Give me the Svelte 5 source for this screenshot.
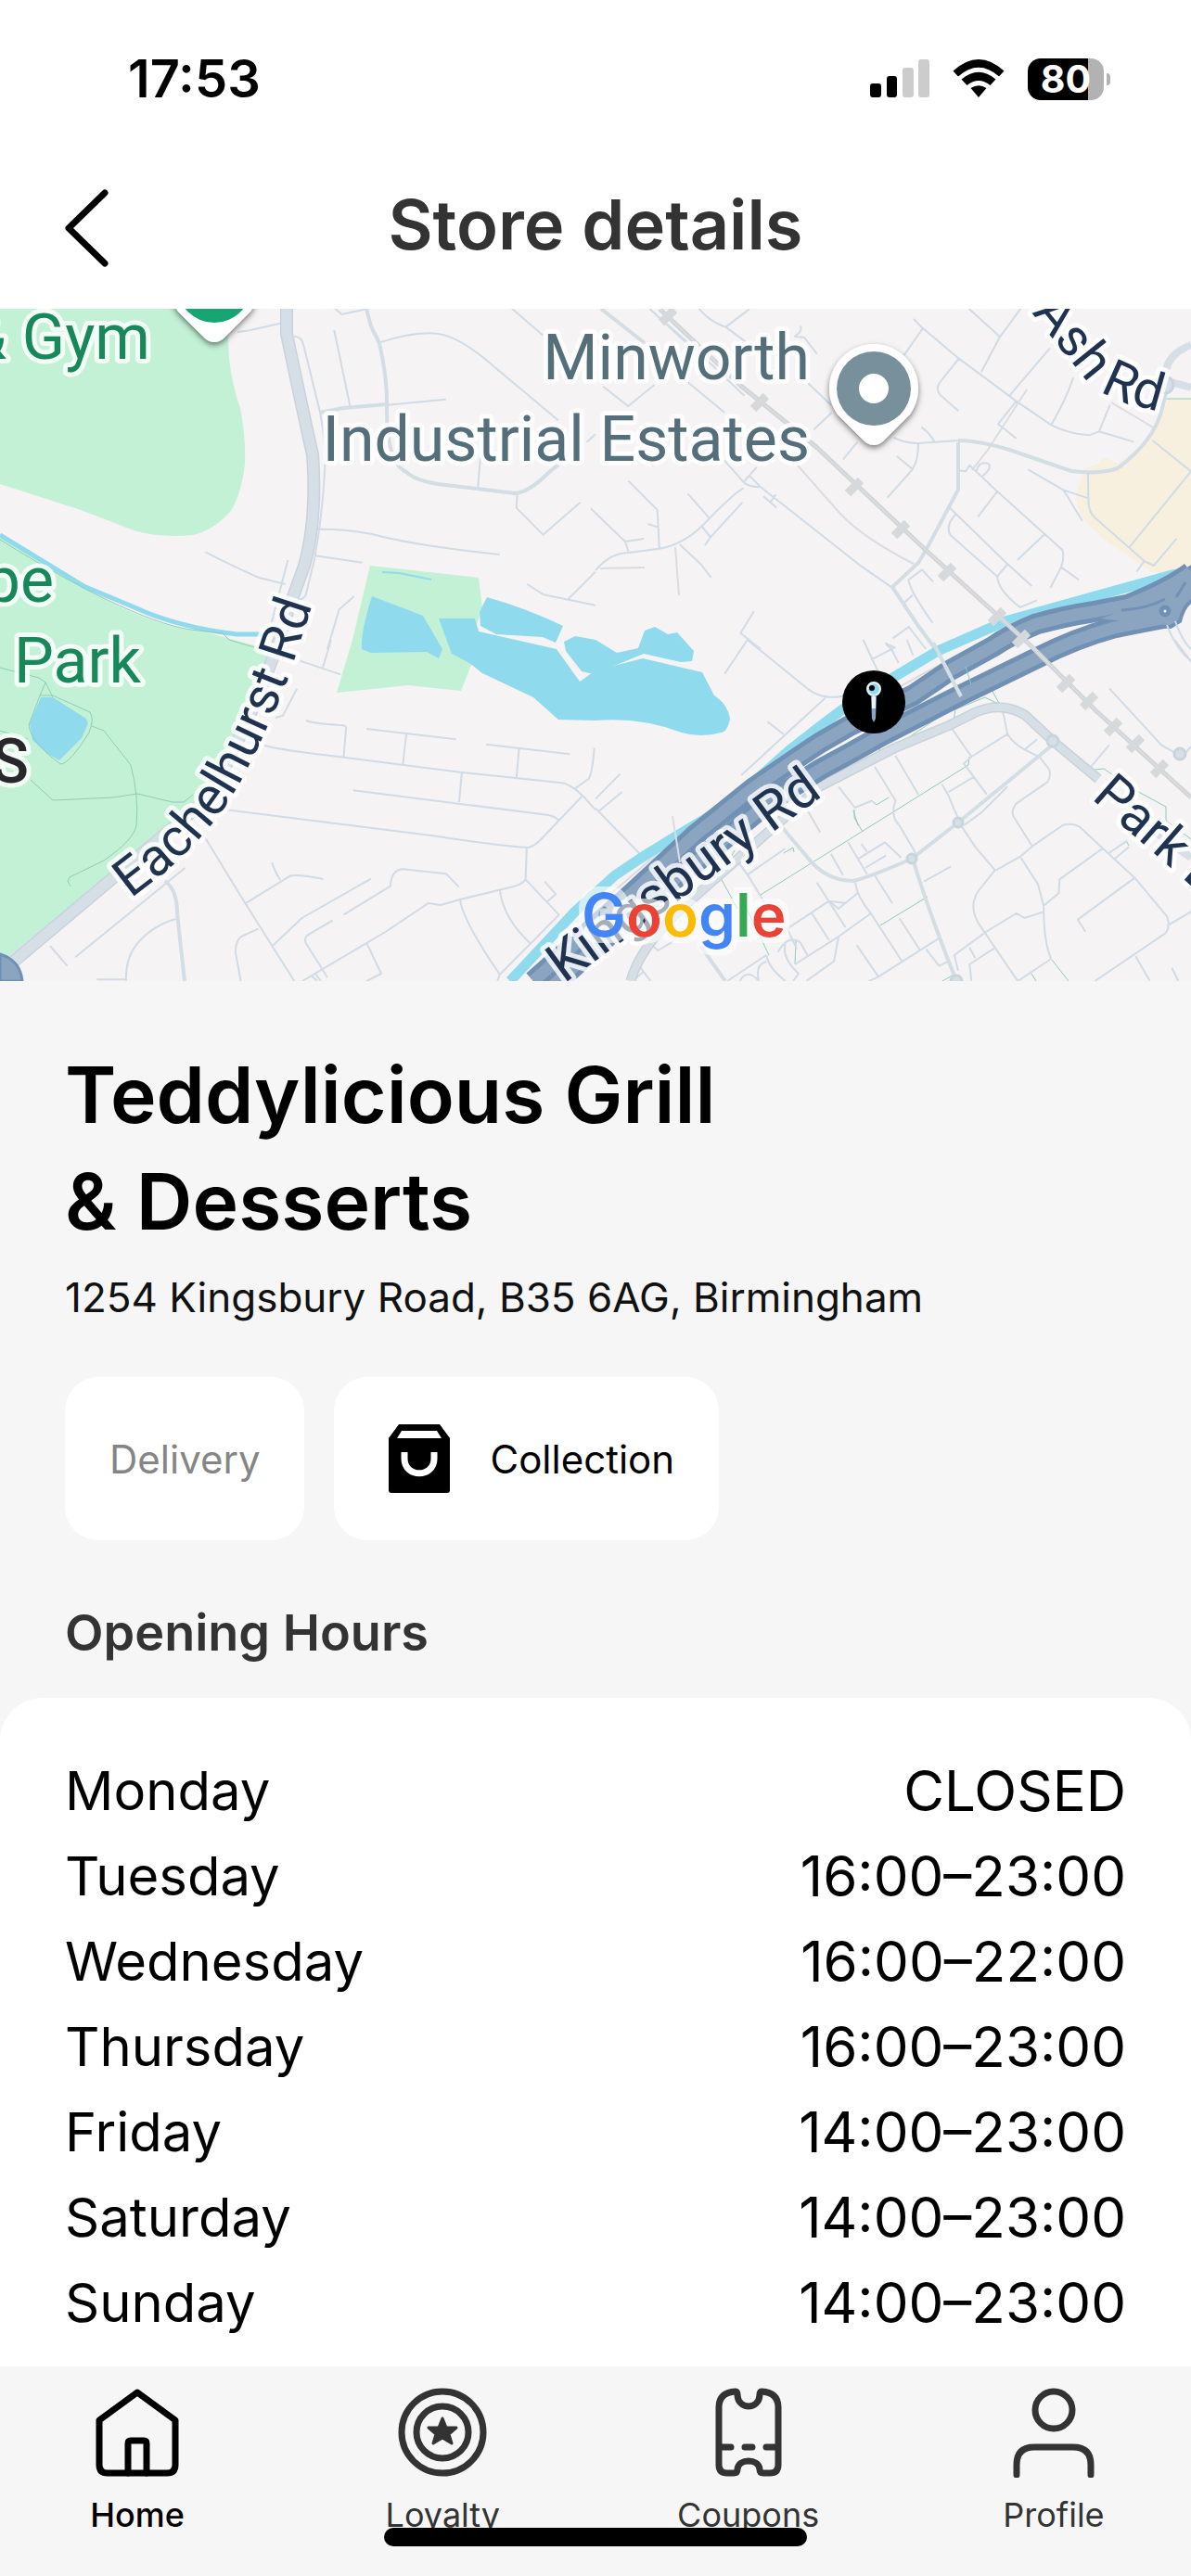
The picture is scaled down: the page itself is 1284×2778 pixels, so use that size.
<script>
  const hours = [
    { day: 'Monday', time: 'CLOSED' },
    { day: 'Tuesday', time: '16:00–23:00' },
    { day: 'Wednesday', time: '16:00–22:00' },
    { day: 'Thursday', time: '16:00–23:00' },
    { day: 'Friday', time: '14:00–23:00' },
    { day: 'Saturday', time: '14:00–23:00' },
    { day: 'Sunday', time: '14:00–23:00' }
  ];

  // Map geometry is drawn per quadrant; each quadrant has its own local units.
  const minorRoads = [
    {
      at: 'translate(0 320) scale(.4094 .33333)',
      d: 'M625 115 L660 108 L738 86 M775 128 Q795 128 800 160 L842 370 Q860 480 855 560 Q850 700 828 850 L805 965 Q798 980 785 980 M880 108 L922 355 M882 38 L900 57 L965 40 M1000 148 Q1120 100 1180 128 Q1230 150 1300 225 L1470 400 M1348 38 L1430 125 M1020 350 L1174 332 M1265 520 L1258 622 M1362 640 L1360 683 L1430 770 L1528 665 M1556 685 L1568 700 M828 753 Q900 750 980 768 Q1090 805 1316 834 M830 838 L954 860 M541 826 Q610 870 680 908 L752 930 M758 852 L715 1055 M932 970 L893 1012 L862 1140 M1388 930 L1432 964 L1568 998 M1495 980 L1568 890 M1545 470 L1568 445'
    },
    {
      at: 'translate(642 320) scale(.4094 .33333)',
      d: 'M142 38 L240 150 M272 38 Q300 80 343 98 L400 150 M343 98 L405 40 M540 95 Q545 112 525 128 L550 132 L583 185 M20 290 L86 354 L155 285 M242 275 L340 375 M560 280 L620 350 M575 430 L622 375 M190 90 L280 190 L392 320 M652 526 L690 470 M785 456 Q820 475 850 474 L955 465 M838 72 L862 102 L812 190 M862 102 L957 200 L1108 338 L1200 415 Q1250 445 1300 448 L1326 436 L1418 470 M957 200 L905 280 Q895 300 908 318 L956 370 M983 38 L1065 130 M1120 38 L1065 130 L1016 243 M1197 166 L1090 320 M1108 338 L1060 412 L1108 458 M1258 262 Q1240 330 1200 415 M1355 350 L1326 436 M858 422 Q880 440 893 470 M850 474 Q850 530 835 558 L769 650 M835 558 L793 515 M955 562 L975 565 L985 545 L1058 630 L1183 768 L1230 820 Q1235 850 1226 875 L1198 942 M1226 875 L1273 916 M1003 565 Q1010 530 1035 540 Q1045 555 1018 582 M1058 630 L1007 712 M1183 768 L1111 852 M932 682 L1085 865 L1149 936 M948 705 Q920 740 935 772 L1058 905 Q1060 950 1118 1005 L1162 982 M1085 865 L1058 905 M1139 559 L1232 625 L1298 652 M1232 625 L1282 725 M1297 572 L1298 665 Q1300 700 1315 715 L1445 855 L1425 890 M1445 855 L1470 870 L1530 783 M1405 812 L1568 565 L1467 465 M340 530 L390 600 Q400 615 435 616 L700 872 L780 940 M390 600 L424 552 M404 578 L435 616 M390 620 Q370 630 300 717 Q240 800 168 815 L88 828 Q40 828 0 885 M300 717 L243 637 M303 778 L387 665 M280 743 L303 778 L288 804 M168 815 L163 690 L86 595 M163 745 L138 735 M222 802 L278 866 L304 908 M0 700 L78 792 L127 783 M78 792 L88 828 M475 640 L460 665 M442 645 L477 683 M813 990 L835 965 M889 922 L860 883 L825 915 Q822 940 888 1056 M765 1125 L780 1140 M783 1105 L825 1068 L870 1140 M417 1018 L382 1088 L435 1140'
    },
    {
      at: 'translate(0 690) scale(.4094 .33333)',
      d: 'M872 0 L850 90 M790 68 L897 112 M782 158 L745 245 L725 252 M697 342 Q740 357 905 380 L1212 428 L1480 463 Q1510 470 1550 525 L1568 550 M806 261 Q830 272 890 275 Q915 275 911 290 L905 380 M965 288 L1201 322 M1070 305 L1061 402 M1280 338 L1500 370 M1367 350 L1360 446 M1216 430 L1209 525 M930 487 L1440 566 Q1460 570 1470 582 M1565 350 Q1560 430 1550 450 L1512 483 M596 550 Q880 595 1150 635 Q1320 668 1392 672 Q1410 665 1425 645 L1532 507 M1387 672 L1384 775 Q1375 790 1355 797 L1212 840 L1160 858 L1128 852 L1015 945 L796 1104 M1384 775 L1472 890 L1316 1083 L1310 1104 M1434 782 L1464 823 L1440 848 M1212 840 Q1215 900 1316 1083 M1316 808 Q1325 900 1395 980 M540 640 L646 853 L775 1104 M716 720 Q720 740 738 778 M646 853 L765 763 Q790 758 851 774 M977 773 L795 900 L716 992 M905 889 L1028 797 Q1030 745 1060 742 L1175 757 L1208 799 M876 908 L810 955 Q800 965 805 980 L862 1092 M680 935 L635 960 Q620 975 620 1010 L634 1104 M463 903 Q400 925 360 985 Q330 1030 332 1104 M255 1099 L332 1099 M487 738 L198 1027 M132 990 L177 1055 M965 980 L1004 1080 L965 1104 M819 1085 L835 1104 M829 1078 L845 1104'
    },
    {
      at: 'translate(642 690) scale(.4094 .33333)',
      d: 'M400 0 L560 160 Q600 195 650 182 L725 130 M400 0 L340 110 M705 0 L745 105 M725 65 L788 25 L763 10 M775 20 L798 75 M820 0 L836 50 M453 265 L495 305 M605 188 L384 438 M65 434 L0 515 M70 492 L8 555 L115 690 M8 555 L0 545 M940 290 L990 378 L1085 305 M1070 215 L1085 305 Q1100 335 1130 355 L1170 380 L1195 420 Q1200 445 1190 460 L1108 530 Q1090 560 1105 580 L1150 668 L1230 600 Q1255 590 1275 605 L1420 770 L1505 895 Q1515 930 1500 950 L1315 1104 M1130 355 L1163 322 M1055 745 L1120 700 L1150 668 M640 475 L683 543 L725 522 M735 410 L790 520 Q775 570 800 600 L843 690 M790 375 L850 500 M990 378 L970 400 L1030 500 M930 492 L998 442 M912 468 Q930 500 940 535 L956 580 M1085 475 L1015 560 L970 600 M965 605 L1000 670 L1052 745 L1010 810 Q980 860 1010 920 L1112 1104 L1200 1032 M1120 705 L1165 790 L1180 860 Q1180 980 1200 1032 M1180 860 L1220 820 L1222 775 L1335 675 M1420 770 L1270 905 L1290 944 M1568 880 L1505 925 M1422 1023 L1460 1104 M1518 1062 L1535 1104 M1352 690 L1400 650 M1368 708 L1405 670 M555 545 L592 623 M865 782 L936 733 M684 785 Q688 830 725 885 L808 1042 M735 762 L782 853 M725 885 L640 960 L525 1050 M690 820 L640 870 L615 845 L660 852 M583 785 L658 930 M615 845 L505 935 L530 1000 M365 700 L400 760 L500 675 M398 755 L445 850 M690 710 L762 655 L805 705 M700 660 L715 685 M665 655 L715 758 M765 698 L710 738 M620 692 L652 762 M570 885 L615 972 M640 960 L628 1040 L555 1104 M480 1010 Q510 950 540 980 L558 1020 M500 985 Q490 1030 535 1080 L520 1104 M347 1104 L450 1020 M450 1020 Q455 1060 500 1104 M430 1104 Q420 1050 450 1040 M380 1104 Q400 1060 430 1104 M688 988 L745 1090 L905 965 M745 1090 L720 1104 M800 900 L855 1005 M870 1000 L905 1055 L930 1040 M1028 945 L945 1020 L955 1070 M1028 945 L1108 885 L1130 900 L1180 880 M985 995 L1000 1030 M1050 998 L985 1050 L990 1104 M115 1055 L145 1104 M98 1104 L125 1075 M150 990 L165 1005 L205 975 M1353 157 L1490 340 L1525 365 M1540 385 L1568 345 M1525 0 L1568 70 M1305 410 L1353 340'
    }
  ];

  const sleepers = [
    [720, 341], [819, 434], [921, 525], [971, 571], [1021, 617], [1075, 665], [1101, 689],
    [1149, 737], [1174, 756], [1200, 784], [1224, 802], [1250, 829]
  ];

  const carriageways = [
    'M1284 617 Q1262 634 1217 652 L1177 660 Q1150 664 1117 673 Q1090 684 1071 697 L1024 723 L984 750 L917 782 L884 801 L860 817 L812 850 L750 900 L683 962 L575 1058',
    'M1257 666 Q1225 672 1201 677 Q1160 688 1117 710 L1031 752 L951 793 L917 812 L884 830 L830 864 L765 918 L695 974 L597 1062'
  ];

  const nav = ['Home', 'Loyalty', 'Coupons', 'Profile'];
</script>

<div class="screen">
  <div class="status">
    <span class="clock">17:53</span>
    <div class="indicators">
      <svg class="signal" viewBox="0 0 64 42" aria-hidden="true">
        <rect x="0" y="26" width="12" height="15" rx="3" />
        <rect x="18" y="18" width="11" height="23" rx="3" />
        <rect class="off" x="35" y="9" width="12" height="32" rx="3" />
        <rect class="off" x="52" y="0" width="12" height="41" rx="3" />
      </svg>
      <svg class="wifi" viewBox="0 0 56 42" aria-hidden="true">
        <path d="M0.500 12.500 Q28 -12.500 55.500 12.500 L50 18.500 Q28 -1 6 18.500 Z" />
        <path d="M9.500 21.500 Q28 6 46.500 21.500 L40.500 28 Q28 18 15.500 28 Z" />
        <path d="M19.500 31 Q28 25.500 36.500 31 L28 41 Z" />
      </svg>
      <span class="battery">80</span>
    </div>
  </div>

  <header>
    <button class="back" aria-label="Back">
      <svg viewBox="0 0 52 88"><path d="M46 6 L7 44 L46 82" /></svg>
    </button>
    <h2>Store details</h2>
  </header>

  <svg class="map" viewBox="0 333 1284 725" preserveAspectRatio="xMidYMid slice" role="img" aria-label="Map">
    <defs>
      <filter id="shade" x="-30%" y="-30%" width="160%" height="160%">
        <feDropShadow dx="0" dy="3" stdDeviation="3" flood-color="#000" flood-opacity=".5" />
      </filter>
      <filter id="halo" x="-10%" y="-20%" width="120%" height="140%">
        <feMorphology in="SourceAlpha" operator="dilate" radius="6" result="wide" />
        <feFlood flood-color="#fff" flood-opacity=".6" />
        <feComposite in2="wide" operator="in" result="glow" />
        <feMerge><feMergeNode in="glow" /><feMergeNode in="SourceGraphic" /></feMerge>
      </filter>
      <path id="eachelhurst" d="M141 969 L176 942 Q234 892 262 838 Q294 776 314 722 L344 630" />
      <path id="ash" d="M1112 337 L1166 404 Q1185 425 1213 434 L1284 454" />
    </defs>
    <rect y="333" width="1284" height="725" fill="#f5f3f4" />

    <g class="green">
      <path d="M0 333 H244 L247 386 Q250 415 259 440 Q265 470 264 500 Q260 535 248 552 Q230 572 208 577 Q175 580 147 573 L87 550 L0 522 Z" />
      <path d="M0 578 L70 623 L130 655 Q180 678 215 680 L274 696 L290 705 L283 725 Q270 780 240 830 Q210 880 135 930 L8 1033 L0 1030 Z" />
      <path d="M399 610 L516 623 L520 655 L512 680 L508 717 L497 745 L440 739 L363 747 L380 690 Z" />
    </g>
    <path d="M1253 443 L1260 430 H1284 V612 L1262 621 L1240 616 L1217 600 Q1160 565 1160 535 L1167 510 L1170 505 L1184 500 L1190 493 L1205 500 Q1235 480 1245 460 Z" fill="#f7f0df" />
    <g class="water">
      <path d="M401 643 L456 664 L477 700 L473 710 L460 703 L400 704 L390 700 Q389 680 401 643 Z" />
      <path d="M473 667 L512 667 L516 681 L600 700 L625 735 L642 723 L693 710 L757 725 L770 750 Q785 760 787 775 Q784 790 777 790 Q755 796 735 790 Q690 773 642 777 L602 776 L575 752 L520 726 L506 715 L487 705 Z" />
      <path d="M525 644 Q565 655 607 675 L599 693 L585 687 L535 684 L518 675 L517 660 Z" />
      <path d="M608 692 L620 686 L642 690 L665 704 L688 699 L695 680 L706 676 L720 684 L730 682 L748 702 L746 713 L734 714 L694 705 L640 727 L627 724 L610 702 Z" />
      <path d="M44 752 L57 752 L93 775 L95 780 L88 796 L64 820 L50 812 L35 798 L32 780 Z" />
    </g>
    <path class="stream" d="M0 577 L90 632 L145 655 Q190 676 255 684 L283 684" />
    <path class="brook" d="M412 617 L430 618 L465 625" />
    <g class="path">
      <path d="M0 582 Q150 675 214 680 L240 683 L247 690 L274 698 M0 720 L42 731 L49 736 L57 752 M49 736 L43 750 L31 782 Q33 800 65 824 Q75 824 96 790 Q102 775 97 768 L57 750 H43 M0 788 L30 797 M99 783 L112 788 L141 825 Q150 860 147 890 Q145 905 112 928 L75 946 L73 950 L76 956 M33 841 L57 863 L122 860 L148 856 L186 865 H198 L208 857" />
      <path d="M1067 740 L1078 760 L1062 752 L1030 765 L1028 778 M919 830 L948 810 L949 805 M1045 816 L1044 825 L820 965 M920 874 L925 890 M939 863 L945 868 L958 860 M921 873 V882 L930 897 M777 946 L792 917 M845 920 L855 914 L856 919 M777 947 L795 980 M805 980 L829 1030 M858 1015 L857 1040 M949 998 L1000 967 M1180 830 L1190 829 L1220 850 L1257 870 V885 L1284 905 M1215 908 L1217 912 M1112 1050 L1117 1058 M1134 1035 L1152 1058 M1016 1058 L1030 1050 M888 842 L980 795 L1020 768 M1257 430 H1284" />
    </g>

    {#each minorRoads as tile}
      <g transform={tile.at}><path class="minor" d={tile.d} /></g>
    {/each}

    <g class="medium">
      <path d="M395 333 L400 352 L409 370 Q418 410 417 440 Q417 500 438 509 Q450 520 480 523 L555 532 Q570 531 590 511 L603 500 M345 445 L370 440 L417 436" />
      <path d="M648 333 L695 370 M1033 477 V528 L1000 590 L990 607 L962 633 L990 675 L1007 698 M1033 475 Q1055 475 1088 485 L1155 508 Q1185 512 1205 505 Q1245 475 1253 440 L1258 420" />
      <path d="M178 950 Q191 960 191 985 L199 1058 M843 892 L870 924 Q890 950 920 950 Q940 945 983 926 L1033 887 L1135 803 M984 926 Q1000 980 1030 1055 M755 1020 L782 1058" />
    </g>
    <path class="arterial-edge" d="M309 333 V360 Q330 460 337 490 Q342 560 328 610 L310 660 Q285 750 225 860 Q190 890 5 1045" />
    <path class="arterial" d="M309 333 V360 Q330 460 337 490 Q342 560 328 610 L310 660 Q285 750 225 860 Q190 890 5 1045" />
    <path class="connector-edge" d="M680 1058 Q690 1020 740 975 L850 878 L884 848 L964 807 L1024 782 L1052 768 Q1080 756 1105 771 L1136 800 L1184 840" />
    <path class="connector" d="M680 1058 Q690 1020 740 975 L850 878 L884 848 L964 807 L1024 782 L1052 768 Q1080 756 1105 771 L1136 800 L1184 840 M1235 890 L1284 925 M1284 372 Q1255 383 1256 410 L1284 418" />
    <g class="roundabout">
      <circle cx="1135" cy="799" r="6" /><circle cx="1033" cy="887" r="5" /><circle cx="983" cy="926" r="5" />
      <circle cx="1031" cy="1058" r="6" /><circle cx="1256" cy="415" r="9" /><circle cx="1272" cy="813" r="6" />
    </g>

    <path class="siding" d="M1284 626 Q1180 652 1110 674 Q1040 700 964 744 L884 796 L780 878 L700 928 L640 980" />
    <path class="river" d="M1284 617 L1264 620 L1184 642 L1084 670 L1011 702 L964 730 L907 766 L883 784 L850 810 L813 843 L783 868 L757 885 L727 903 L693 924 L663 944 L620 983 L550 1058" />
    <g class="motorway-edge">
      {#each carriageways as d}<path {d} />{/each}
    </g>
    <path class="junction" d="M1177 668 Q1240 648 1260 628 L1286 610 V647 Q1276 653 1272 670 L1262 676 L1230 674 Z" />
    <g class="motorway">
      {#each carriageways as d}<path {d} />{/each}
    </g>
    <path class="slip" d="M1209 658 Q1235 657 1256 646 M1268 644 L1278 628" />
    <path d="M0 1029 Q22 1036 24 1058 H0 Z" fill="#8ba5c1" stroke="#6f90b4" stroke-width="3" />
    <circle cx="1256" cy="659" r="4" fill="#f5f3f4" stroke="#6f90b4" stroke-width="5" />
    <path class="medium" d="M1006 693 L1036 751" />
    <path class="path" d="M1041 719 L1047 738" />
    <path class="minor" d="M1258 674 Q1268 700 1284 713 M1267 670 Q1275 692 1284 700" />

    <g class="rail">
      <path d="M711 333 L800 417 L880 482 L1000 595 L1110 695 L1180 765 L1284 860" />
      <path class="rail-core" d="M711 333 L800 417 L880 482 L1000 595 L1110 695 L1180 765 L1284 860" />
      {#each sleepers as [x, y]}
        <path class="sleeper" d="M{x - 7} {y + 7} L{x + 7} {y - 7}" />
      {/each}
      <path class="siding" d="M860 502 L905 553 Q930 580 985 608 M725 880 L733 930 M1107 420 L1065 485 L1048 507 M1198 434 L1245 462 M728 590 L732 642 M647 613 L695 612" />
    </g>

    <g class="label">
      <text class="place" x="162" y="387" text-anchor="end">&amp; Gym</text>
      <text class="place" x="58" y="649" text-anchor="end">pe</text>
      <text class="place" x="152" y="736" text-anchor="end">s Park</text>
      <text class="area" x="31" y="844" text-anchor="end">S</text>
      <text class="place grey" x="873" y="409" text-anchor="end">Minworth</text>
      <text class="place grey" x="873" y="497" text-anchor="end">Industrial Estates</text>
      <text class="road"><textPath href="#eachelhurst">Eachelhurst Rd</textPath></text>
      <text class="road"><textPath href="#ash">Ash Rd</textPath></text>
      <text class="road kingsbury" transform="translate(608 1061) rotate(-36)">Kingsbury Rd</text>
      <text class="road" transform="translate(1176 861) rotate(41)">Park Ln</text>
    </g>

    <g filter="url(#shade)">
      <path d="M942 371 A48 48 0 0 1 981 447 L952 476 Q942 484 932 476 L903 447 A48 48 0 0 1 942 371 Z" fill="#fff" />
      <path d="M231 260 A48 48 0 0 1 270 336 L241 365 Q231 373 221 365 L192 336 A48 48 0 0 1 231 260 Z" fill="#fff" />
    </g>
    <circle cx="942" cy="419" r="40" fill="#78909c" />
    <circle cx="942" cy="419" r="16" fill="#fff" />
    <circle cx="231" cy="308" r="40" fill="#17a673" />

    <circle cx="942" cy="757" r="34" fill="#000" />
    <circle cx="942" cy="743" r="7" fill="#90daee" stroke="#e8f4f8" stroke-width="2" />
    <circle cx="940" cy="742" r="3" fill="#000" />
    <path d="M939 751 H945 L944 775 L942 779 L940 775 Z" fill="#8ba5c1" />
    <path d="M940 751 H944 V764 H940 Z" fill="#e8f4f8" />

    <text class="google" x="627" y="1010" filter="url(#halo)"><tspan fill="#4285f4">G</tspan><tspan fill="#ea4335">o</tspan><tspan fill="#fbbc05">o</tspan><tspan fill="#4285f4">g</tspan><tspan fill="#34a853">l</tspan><tspan fill="#ea4335">e</tspan></text>
  </svg>

  <main>
    <h1>Teddylicious Grill<br />&amp; Desserts</h1>
    <p class="address">1254 Kingsbury Road, B35 6AG, Birmingham</p>
    <div class="modes">
      <button class="delivery">Delivery</button>
      <button class="collection">
        <svg viewBox="0 0 68 74" aria-hidden="true">
          <path fill-rule="evenodd" d="M12 0 H56 L67 15 V71 Q67 74 64 74 H4 Q1 74 1 71 V15 Z M15 7 L10 15 H58 L53 7 Z" />
          <path class="handle" d="M18 30 V37 C18 58 50 58 50 37 V30" />
        </svg>
        Collection
      </button>
    </div>
    <h3>Opening Hours</h3>
  </main>

  <section class="hours">
    <table>
      <tbody>
        {#each hours as row}
          <tr><th scope="row">{row.day}</th><td>{row.time}</td></tr>
        {/each}
      </tbody>
    </table>
  </section>

  <nav>
    {#each nav as name, i}
      <a href="#{name.toLowerCase()}" class:active={i === 0}>
        <svg viewBox="0 0 98 98" aria-hidden="true">
          {#if i === 0}
            <path d="M49 6 L90 36 V84 Q90 93 81 93 H17 Q8 93 8 84 V36 Z" />
            <path d="M39 93 V61 Q39 58 42 58 H56 Q59 58 59 61 V93" />
          {:else if i === 1}
            <circle cx="49" cy="49" r="44" />
            <circle cx="49" cy="49" r="28" />
            <path class="star" d="M49 34 L53 44 L64 44 L56 51 L59 61 L49 55 L39 61 L42 51 L34 44 L45 44 Z" />
          {:else if i === 2}
            <path d="M35 5 Q17 6 17 22 V84 Q17 93 26 93 H33 Q37 93 37 89 C38 77 60 77 61 89 Q61 93 65 93 H72 Q81 93 81 84 V22 Q81 6 63 5 Q61 5 61 9 C60 25 38 25 37 9 Q37 5 35 5 Z" />
            <path d="M19 65 H30 M45 65 H53 M68 65 H79" />
          {:else}
            <circle cx="49" cy="25" r="20" />
            <path d="M9 95 V84 Q9 65 28 65 H70 Q89 65 89 84 V95" />
          {/if}
        </svg>
        <span>{name}</span>
      </a>
    {/each}
    <div class="home-indicator"></div>
  </nav>
</div>

<style>
  :global(body) { background: #f6f6f6; }
  .screen {
    min-height: 100vh;
    display: flex;
    flex-direction: column;
    font-family: Inter, "Liberation Sans", sans-serif;
    color: #000;
    background: #f6f6f6;
  }
  button { font: inherit; color: inherit; border: 0; background: none; cursor: pointer; }

  .status {
    display: flex;
    align-items: center;
    justify-content: space-between;
    height: 130px;
    padding: 20px 94px 0 138px;
    background: #fff;
  }
  .clock { font-size: 56px; font-weight: 600; line-height: 64px; }
  .indicators { display: flex; align-items: center; gap: 25px; }
  .signal { width: 64px; height: 42px; }
  .signal .off { fill: #ccc; }
  .wifi { width: 56px; height: 42px; }
  .battery {
    position: relative;
    width: 82px;
    height: 45px;
    border-radius: 14px;
    background: linear-gradient(90deg, #000 79%, #b2b2b2 79%);
    color: #fff;
    font-size: 41px;
    font-weight: 700;
    line-height: 45px;
    text-align: center;
  }
  .battery::after {
    content: "";
    position: absolute;
    right: -7px;
    top: 16px;
    width: 4px;
    height: 13px;
    border-radius: 0 6px 6px 0;
    background: #b2b2b2;
  }

  header {
    display: grid;
    grid-template-columns: 1fr auto 1fr;
    align-items: center;
    height: 183px;
    padding: 0 67px;
    background: #fff;
  }
  .back { justify-self: start; padding: 8px 0 0; }
  .back svg { display: block; width: 52px; height: 88px; fill: none; stroke: #000; stroke-width: 7; stroke-linecap: round; stroke-linejoin: round; }
  h2 { margin: 0; color: #333; font-size: 74px; font-weight: 600; line-height: 86px; }

  .map { display: block; width: 100%; aspect-ratio: 1284 / 725; }
  .green { fill: #c3f1d5; }
  .water { fill: #90daee; }
  .stream, .river, .brook, .path { fill: none; stroke: #90daee; stroke-width: 5; }
  .brook { stroke-width: 2; }
  .river { stroke-width: 11; }
  .path { stroke: #8fccb5; stroke-width: 1; }
  .minor { fill: none; stroke: #d0dbe6; stroke-width: 2; vector-effect: non-scaling-stroke; stroke-linejoin: round; }
  .medium { fill: none; stroke: #d3dde4; stroke-width: 4; }
  .arterial, .arterial-edge, .connector, .connector-edge { fill: none; stroke: #d6dfe6; stroke-width: 11; }
  .arterial-edge { stroke: #c8d2dc; stroke-width: 14; }
  .connector { stroke-width: 8; }
  .connector-edge { stroke: #c8d2d9; stroke-width: 11; }
  .roundabout { fill: #d6dfe6; stroke: #c8d4dc; stroke-width: 3; }
  .motorway, .motorway-edge { fill: none; stroke: #8ba5c1; stroke-width: 13; }
  .motorway-edge { stroke: #7090b4; stroke-width: 23; }
  .junction { fill: #8ba5c1; stroke: #7090b4; stroke-width: 4; }
  .slip { fill: none; stroke: #7090b4; stroke-width: 3; }
  .rail { fill: none; stroke: #d2d5d7; stroke-width: 5; }
  .rail-core { stroke: #e4e5e7; stroke-width: 1; }
  .sleeper { stroke: #d5d9dc; stroke-width: 9; }
  .siding { fill: none; stroke: #dadce0; stroke-width: 2; }
  .label text { font-family: Roboto, Inter, sans-serif; stroke: #fff; stroke-opacity: .8; stroke-width: 10; stroke-linejoin: round; paint-order: stroke; }
  .label .place { fill: #17885a; font-size: 68px; }
  .label .grey { fill: #546e7a; }
  .label .area { fill: #28282c; font-size: 66px; font-weight: 500; }
  .label .road { fill: #1f3350; font-size: 57px; }
  .label .kingsbury { font-size: 59px; }
  .google { font-family: Inter, sans-serif; font-size: 64px; font-weight: 600; }

  main { padding: 65px 70px 0; }
  h1 { margin: 0; font-size: 84px; font-weight: 600; line-height: 115px; }
  .address { margin: 13px 0 53px; color: #111; font-size: 44px; line-height: 66px; }
  .modes { display: flex; gap: 32px; }
  .modes button {
    display: flex;
    align-items: center;
    height: 176px;
    padding: 0 48px;
    border-radius: 36px;
    background: #fff;
    font-size: 42px;
  }
  .modes .delivery { color: #858585; }
  .modes .collection { gap: 42px; padding-left: 58px; }
  .collection svg { width: 68px; height: 74px; fill: #000; }
  .collection .handle { fill: none; stroke: #fff; stroke-width: 7; }
  h3 { margin: 64px 0 34px; color: #333; font-size: 54px; font-weight: 600; line-height: 72px; }

  .hours { flex: 1; padding: 54px 70px 23px; border-radius: 46px 46px 0 0; background: #fff; }
  table { width: 100%; border-collapse: collapse; font-size: 58px; line-height: 92px; }
  th { padding: 0; font-weight: 400; text-align: left; }
  td { padding: 0; font-size: 60px; text-align: right; }

  nav {
    position: relative;
    display: flex;
    justify-content: space-between;
    height: 204px;
    padding: 22px 64px 0;
    background: #f6f6f6;
  }
  nav a {
    display: flex;
    flex-direction: column;
    align-items: center;
    gap: 18px;
    width: 168px;
    color: #333;
    font-size: 36px;
    line-height: 44px;
    text-decoration: none;
  }
  nav svg { width: 98px; height: 98px; fill: none; stroke: currentColor; stroke-width: 7; stroke-linecap: round; stroke-linejoin: round; }
  nav .star { fill: currentColor; stroke-width: 3; }
  nav .active { color: #000; font-weight: 500; }
  .home-indicator {
    position: absolute;
    left: 50%;
    bottom: 32px;
    width: 456px;
    height: 20px;
    margin-left: -228px;
    border-radius: 10px;
    background: #000;
  }
</style>
